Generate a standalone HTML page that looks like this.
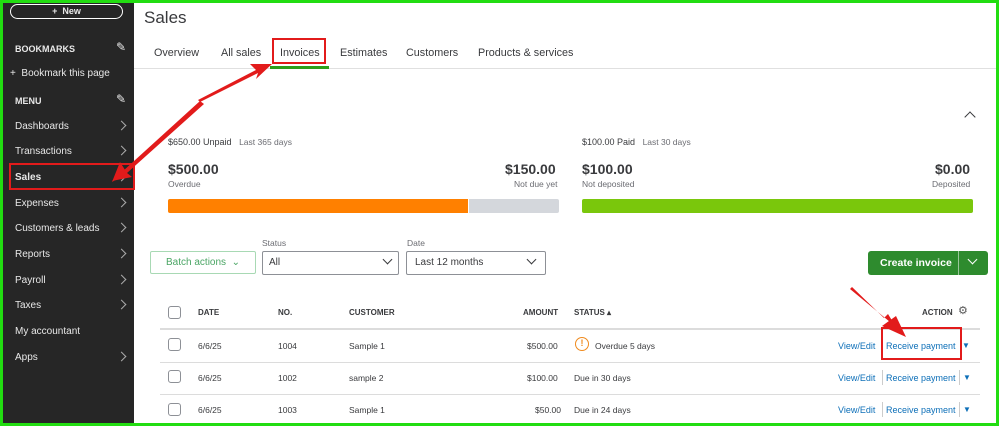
<!DOCTYPE html>
<html><head><meta charset="utf-8"><style>
*{box-sizing:border-box;margin:0;padding:0}
body{width:999px;height:426px;overflow:hidden;font-family:"Liberation Sans",sans-serif;background:#fff;position:relative;color:#393a3d}
.frame{position:absolute;left:0;top:0;width:999px;height:426px;border:3px solid #22dd11;z-index:10;pointer-events:none}
.side{position:absolute;left:0;top:0;width:134px;height:426px;background:#262626;color:#e8e8e8;font-size:10px}
.side .it{position:absolute;left:15px}
.chev{position:absolute;left:118px;width:7px;height:7px;border-right:1.5px solid #aaa;border-top:1.5px solid #aaa;transform:rotate(45deg)}
.abs{position:absolute}
.tab{position:absolute;top:47px;font-size:10.8px;color:#393a3d}
.sm{font-size:8.5px;color:#6b6c72}
.th{position:absolute;top:308px;font-size:8px;font-weight:bold;color:#393a3d}
.cb{position:absolute;left:168px;width:13px;height:13px;border:1px solid #8d9096;border-radius:3px}
.td{position:absolute;font-size:8.5px;color:#393a3d}
.lnk{position:absolute;font-size:9px;color:#0d6fb8}
.hr{position:absolute;left:160px;width:820px;height:1px;background:#dcdcdc}
</style></head><body>
<div class="side">
 <div class="abs" style="left:10px;top:4px;width:113px;height:15px;border:1.5px solid #fff;border-radius:8px;text-align:center;font-size:9px;font-weight:bold;line-height:12px">+&nbsp; New</div>
 <div class="it" style="top:44px;font-weight:bold;font-size:9px">BOOKMARKS</div>
 <div class="abs" style="left:116px;top:40px;font-size:12px">✎</div>
 <div class="it" style="left:10px;top:68px;font-size:10px">+ &nbsp;Bookmark this page</div>
 <div class="it" style="top:96px;font-weight:bold;font-size:9px">MENU</div>
 <div class="abs" style="left:116px;top:92px;font-size:12px">✎</div>
 <div class="it" style="top:121px">Dashboards</div><div class="chev" style="top:122px"></div>
 <div class="it" style="top:146px">Transactions</div><div class="chev" style="top:147px"></div>
 <div class="it" style="top:172px;font-weight:bold">Sales</div><div class="chev" style="top:173px"></div>
 <div class="it" style="top:198px">Expenses</div><div class="chev" style="top:199px"></div>
 <div class="it" style="top:223px">Customers &amp; leads</div><div class="chev" style="top:224px"></div>
 <div class="it" style="top:249px">Reports</div><div class="chev" style="top:250px"></div>
 <div class="it" style="top:275px">Payroll</div><div class="chev" style="top:276px"></div>
 <div class="it" style="top:300px">Taxes</div><div class="chev" style="top:301px"></div>
 <div class="it" style="top:326px">My accountant</div>
 <div class="it" style="top:352px">Apps</div><div class="chev" style="top:353px"></div>
</div>
<div class="abs" style="left:9px;top:163px;width:126px;height:27px;border:2px solid #e21b1b"></div>

<div class="abs" style="left:144px;top:8px;font-size:17px;color:#393a3d">Sales</div>
<div class="tab" style="left:154px">Overview</div>
<div class="tab" style="left:221px">All sales</div>
<div class="tab" style="left:280px">Invoices</div>
<div class="tab" style="left:340px">Estimates</div>
<div class="tab" style="left:406px">Customers</div>
<div class="tab" style="left:478px">Products &amp; services</div>
<div class="abs" style="left:134px;top:68px;width:865px;height:1px;background:#e0e0e0"></div>
<div class="abs" style="left:270px;top:66px;width:59px;height:3px;background:#2ca01c"></div>
<div class="abs" style="left:272px;top:38px;width:54px;height:26px;border:2px solid #e21b1b"></div>
<div class="abs" style="left:966px;top:108px;width:8px;height:8px;border-left:1.5px solid #393a3d;border-top:1.5px solid #393a3d;transform:rotate(45deg);top:113px"></div>

<div class="abs" style="left:168px;top:137px;font-size:9px"><span style="color:#393a3d">$650.00 Unpaid</span> &nbsp;&nbsp;<span class="sm">Last 365 days</span></div>
<div class="abs" style="left:168px;top:161px;font-size:14px;font-weight:bold">$500.00</div>
<div class="abs sm" style="left:168px;top:179px">Overdue</div>
<div class="abs" style="left:505px;top:161px;font-size:14px;font-weight:bold">$150.00</div>
<div class="abs sm" style="left:514px;top:179px">Not due yet</div>
<div class="abs" style="left:168px;top:199px;width:300px;height:14px;background:#ff8000;border-radius:2px 0 0 2px"></div>
<div class="abs" style="left:469px;top:199px;width:90px;height:14px;background:#d4d7dc;border-radius:0 2px 2px 0"></div>

<div class="abs" style="left:582px;top:137px;font-size:9px">$100.00 Paid &nbsp;&nbsp;<span class="sm">Last 30 days</span></div>
<div class="abs" style="left:582px;top:161px;font-size:14px;font-weight:bold">$100.00</div>
<div class="abs sm" style="left:582px;top:179px">Not deposited</div>
<div class="abs" style="left:935px;top:161px;font-size:14px;font-weight:bold">$0.00</div>
<div class="abs sm" style="left:932px;top:179px">Deposited</div>
<div class="abs" style="left:582px;top:199px;width:391px;height:14px;background:#7ac70c;border-radius:2px"></div>

<div class="abs" style="left:150px;top:251px;width:106px;height:23px;border:1px solid #a8d9b4;border-radius:2px;color:#4aa564;font-size:10px;line-height:21px;padding-left:15px">Batch actions &nbsp;⌄</div>
<div class="abs sm" style="left:262px;top:238px">Status</div>
<div class="abs" style="left:262px;top:251px;width:137px;height:24px;border:1px solid #8d9096;border-radius:2px;font-size:10px;line-height:22px;padding-left:6px">All</div>
<div class="abs" style="left:384px;top:256px;width:7px;height:7px;border-right:1.5px solid #393a3d;border-bottom:1.5px solid #393a3d;transform:rotate(45deg)"></div>
<div class="abs sm" style="left:407px;top:238px">Date</div>
<div class="abs" style="left:406px;top:251px;width:140px;height:24px;border:1px solid #8d9096;border-radius:2px;font-size:10px;line-height:22px;padding-left:8px">Last 12 months</div>
<div class="abs" style="left:528px;top:256px;width:7px;height:7px;border-right:1.5px solid #393a3d;border-bottom:1.5px solid #393a3d;transform:rotate(45deg)"></div>
<div class="abs" style="left:868px;top:251px;width:120px;height:24px;background:#2e8b2e;border-radius:3px;color:#fff;font-size:10.5px;font-weight:bold;line-height:24px;padding-left:12px">Create invoice</div>
<div class="abs" style="left:958px;top:251px;width:1px;height:24px;background:#9ac79a"></div>
<div class="abs" style="left:969px;top:256px;width:7px;height:7px;border-right:1.5px solid #fff;border-bottom:1.5px solid #fff;transform:rotate(45deg)"></div>

<div class="cb" style="top:306px"></div>
<div class="th" style="left:198px">DATE</div>
<div class="th" style="left:278px">NO.</div>
<div class="th" style="left:349px">CUSTOMER</div>
<div class="th" style="left:523px">AMOUNT</div>
<div class="th" style="left:574px">STATUS ▴</div>
<div class="th" style="left:922px">ACTION</div>
<div class="abs" style="left:958px;top:304px;font-size:11px;color:#555">⚙</div>
<div class="hr" style="top:328px;height:2px"></div>

<div class="cb" style="top:338px"></div>
<div class="td" style="left:198px;top:341px">6/6/25</div><div class="td" style="left:278px;top:341px">1004</div><div class="td" style="left:349px;top:341px">Sample 1</div><div class="td" style="left:527px;top:341px">$500.00</div>
<div class="abs" style="left:575px;top:337px;width:14px;height:14px;border:1.5px solid #ef8a1e;border-radius:50%;color:#ef8a1e;font-size:9px;text-align:center;line-height:11px;font-weight:bold">!</div>
<div class="td" style="left:595px;top:341px">Overdue 5 days</div>
<div class="lnk" style="left:838px;top:341px">View/Edit</div><div class="lnk" style="left:886px;top:341px">Receive payment</div><div class="lnk" style="left:962px;top:341px;font-size:8px">▼</div>
<div class="abs" style="left:881px;top:327px;width:81px;height:33px;border:2px solid #e21b1b"></div>
<div class="hr" style="top:362px"></div>

<div class="cb" style="top:370px"></div>
<div class="td" style="left:198px;top:373px">6/6/25</div><div class="td" style="left:278px;top:373px">1002</div><div class="td" style="left:349px;top:373px">sample 2</div><div class="td" style="left:527px;top:373px">$100.00</div>
<div class="td" style="left:574px;top:373px">Due in 30 days</div>
<div class="lnk" style="left:838px;top:373px">View/Edit</div><div class="abs" style="left:882px;top:370px;width:1px;height:15px;background:#ccc"></div><div class="lnk" style="left:886px;top:373px">Receive payment</div><div class="abs" style="left:959px;top:370px;width:1px;height:15px;background:#ccc"></div><div class="lnk" style="left:963px;top:373px;font-size:8px">▼</div>
<div class="hr" style="top:394px"></div>

<div class="cb" style="top:403px"></div>
<div class="td" style="left:198px;top:405px">6/6/25</div><div class="td" style="left:278px;top:405px">1003</div><div class="td" style="left:349px;top:405px">Sample 1</div><div class="td" style="left:535px;top:405px">$50.00</div>
<div class="td" style="left:574px;top:405px">Due in 24 days</div>
<div class="lnk" style="left:838px;top:405px">View/Edit</div><div class="abs" style="left:882px;top:402px;width:1px;height:15px;background:#ccc"></div><div class="lnk" style="left:886px;top:405px">Receive payment</div><div class="abs" style="left:959px;top:402px;width:1px;height:15px;background:#ccc"></div><div class="lnk" style="left:963px;top:405px;font-size:8px">▼</div>

<svg class="abs" style="left:0;top:0;z-index:9" width="999" height="426">
 <polygon points="272,64 250,64 256,70 198,100 200,102 258,73 256,79" fill="#e21b1b"/>
 <polygon points="200,101 112,181 132,177 127,173 204,104" fill="#e21b1b"/>
 <polygon points="112,182 120,162 127,173" fill="#e21b1b"/>
 <polygon points="850,289 896,327 888,314 884,318 852,287" fill="#e21b1b"/>
 <polygon points="906,337 882,326 896,316" fill="#e21b1b"/>
</svg>
<div class="frame"></div>
</body></html>
